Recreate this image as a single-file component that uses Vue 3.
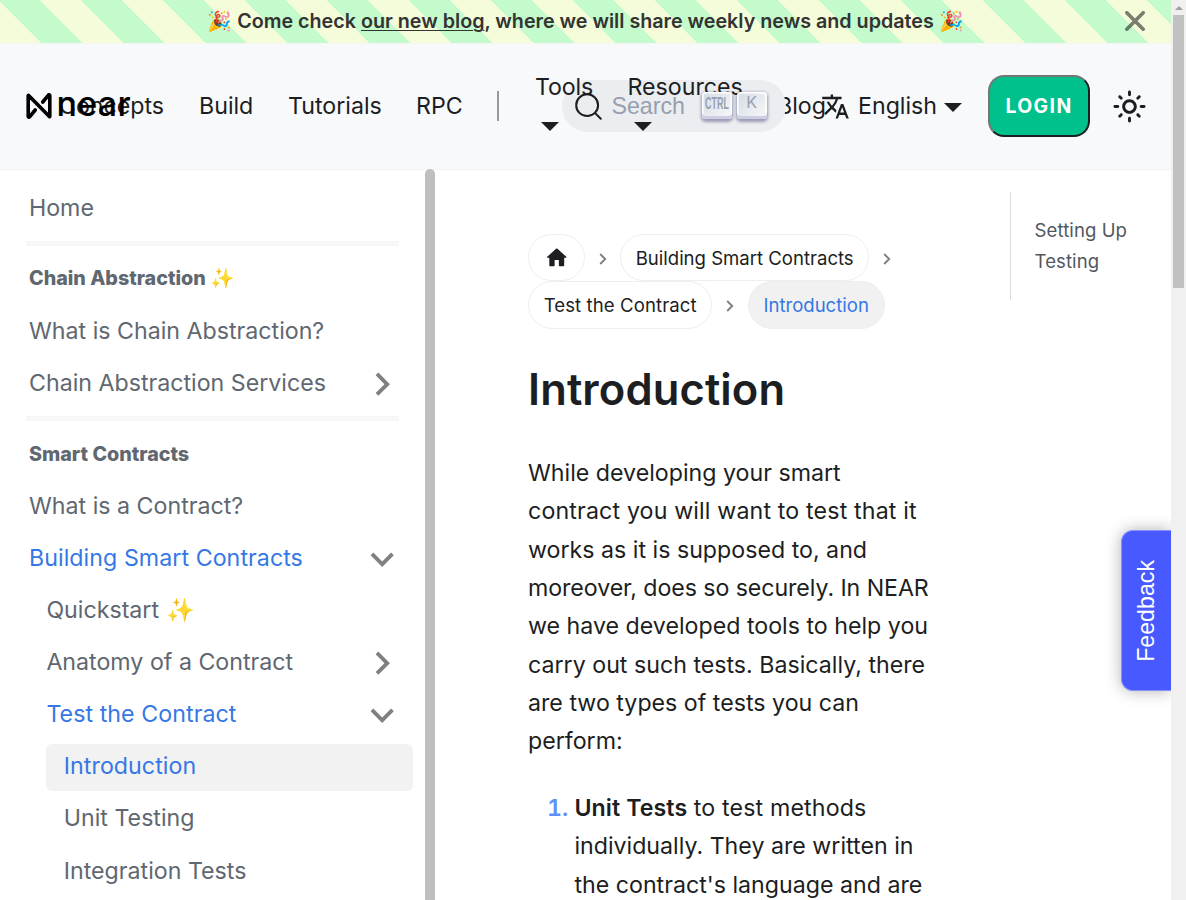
<script setup>
const menu = [
  { text: 'Home', level: 1 },
  { rule: true },
  { text: 'Chain Abstraction ✨', heading: true },
  { text: 'What is Chain Abstraction?', level: 1 },
  { text: 'Chain Abstraction Services', level: 1, caret: 'closed' },
  { rule: true },
  { text: 'Smart Contracts', heading: true },
  { text: 'What is a Contract?', level: 1 },
  { text: 'Building Smart Contracts', level: 1, caret: 'open', active: true },
  { text: 'Quickstart ✨', level: 2 },
  { text: 'Anatomy of a Contract', level: 2, caret: 'closed' },
  { text: 'Test the Contract', level: 2, caret: 'open', active: true },
  { text: 'Introduction', level: 3, active: true, current: true },
  { text: 'Unit Testing', level: 3 },
  { text: 'Integration Tests', level: 3 }
]
const crumbs = [
  { home: true },
  { text: 'Building Smart Contracts' },
  { text: 'Test the Contract' },
  { text: 'Introduction', current: true }
]
</script>

<template>
  <div class="page">
    <div class="view">
      <div class="announce">
        <div class="announce-text">🎉 Come check <a>our new blog</a>, where we will share weekly news and updates 🎉</div>
        <svg class="close" viewBox="0 0 20 20"><path d="M1.8 1.8 18.2 18.2M18.2 1.8 1.8 18.2" fill="none" stroke="#000" stroke-opacity=".5" stroke-width="3.6" stroke-linecap="round" /></svg>
      </div>

      <nav class="navbar">
        <div class="brand">
          <svg class="mark" viewBox="0 0 26 26"><path d="M2.2 2.7v20.6c0 1 1 1.2 1.6.4L9.2 17M23.8 23.3V2.7c0-1-1-1.2-1.6-.4L16.8 9M2.4 2.3 23.6 23.7" fill="none" stroke="#000" stroke-width="3.6" stroke-linecap="round" stroke-linejoin="round" /></svg>
          <span class="wordmark">near</span>
        </div>
        <div class="links">
          <a class="concepts">Concepts</a>
          <a class="build">Build</a>
          <a class="tutorials">Tutorials</a>
          <a class="rpc">RPC</a>
          <span class="divider"></span>
          <a class="drop tools">Tools<i class="tri"></i></a>
          <a class="drop resources">Resources<i class="tri"></i></a>
          <a class="blog">Blog</a>
        </div>
        <div class="nav-end">
          <a class="lang">
            <svg viewBox="0 0 24 24"><path fill="currentColor" d="M12.87 15.07l-2.54-2.51.03-.03c1.74-1.94 2.98-4.17 3.71-6.53H17V4h-7V2H8v2H1v1.99h11.17C11.5 7.92 10.44 9.75 9 11.35 8.07 10.32 7.3 9.19 6.69 8h-2c.73 1.63 1.73 3.17 2.98 4.56l-5.09 5.02L4 19l5-5 3.11 3.11.76-2.04zM18.5 10h-2L12 22h2l1.12-3h4.75L21 22h2l-4.5-12zm-2.62 7l1.62-4.33L19.12 17h-3.24z" /></svg>
            <span>English</span><i class="tri"></i>
          </a>
          <button class="login">LOGIN</button>
          <svg class="sun" viewBox="0 0 24 24"><path fill="currentColor" d="M12,9c1.65,0,3,1.35,3,3s-1.35,3-3,3s-3-1.35-3-3S10.35,9,12,9 M12,7c-2.76,0-5,2.24-5,5s2.24,5,5,5s5-2.24,5-5 S14.76,7,12,7L12,7z M2,13l2,0c0.55,0,1-0.45,1-1s-0.45-1-1-1l-2,0c-0.55,0-1,0.45-1,1S1.45,13,2,13z M20,13l2,0c0.55,0,1-0.45,1-1 s-0.45-1-1-1l-2,0c-0.55,0-1,0.45-1,1S19.45,13,20,13z M11,2v2c0,0.55,0.45,1,1,1s1-0.45,1-1V2c0-0.55-0.45-1-1-1S11,1.45,11,2z M11,20v2c0,0.55,0.45,1,1,1s1-0.45,1-1v-2c0-0.55-0.45-1-1-1C11.45,19,11,19.45,11,20z M5.99,4.58c-0.39-0.39-1.03-0.39-1.41,0 c-0.39,0.39-0.39,1.03,0,1.41l1.06,1.06c0.39,0.39,1.03,0.39,1.41,0s0.39-1.03,0-1.41L5.99,4.58z M18.36,16.95 c-0.39-0.39-1.03-0.39-1.41,0c-0.39,0.39-0.39,1.03,0,1.41l1.06,1.06c0.39,0.39,1.03,0.39,1.41,0c0.39-0.39,0.39-1.03,0-1.41 L18.36,16.95z M19.42,5.99c0.39-0.39,0.39-1.03,0-1.41c-0.39-0.39-1.03-0.39-1.41,0l-1.06,1.06c-0.39,0.39-0.39,1.03,0,1.41 s1.03,0.39,1.41,0L19.42,5.99z M7.05,18.36c0.39-0.39,0.39-1.03,0-1.41c-0.39-0.39-1.03-0.39-1.41,0l-1.06,1.06 c-0.39,0.39-0.39,1.03,0,1.41s1.03,0.39,1.41,0L7.05,18.36z" /></svg>
        </div>
        <div class="search-bg"></div>
        <div class="search">
          <svg viewBox="0 0 20 20"><path d="M14.386 14.386l4.0877 4.0877-4.0877-4.0877c-2.9418 2.9419-7.7115 2.9419-10.6533 0-2.9419-2.9418-2.9419-7.7115 0-10.6533 2.9418-2.9419 7.7115-2.9419 10.6533 0 2.9419 2.9418 2.9419 7.7115 0 10.6533z" fill="none" stroke="#1c1e21" stroke-width="1.4" stroke-linecap="round" stroke-linejoin="round" /></svg>
          <span class="placeholder">Search</span>
          <kbd><span class="ctrl">CTRL</span></kbd>
          <kbd class="k">K</kbd>
        </div>
      </nav>

      <div class="main">
        <aside class="sidebar">
          <div class="menu">
            <template v-for="(m, i) in menu" :key="i">
              <div v-if="m.rule" class="rule"></div>
              <div v-else-if="m.heading" class="item heading level-1">{{ m.text }}</div>
              <div v-else class="item" :class="['level-' + m.level, { active: m.active, current: m.current }]">
                <span>{{ m.text }}</span>
                <svg v-if="m.caret" class="caret" :class="m.caret" viewBox="0 0 24 24"><path fill="#808080" d="M7.41 15.41L12 10.83l4.59 4.58L18 14l-6-6-6 6z" /></svg>
              </div>
            </template>
          </div>
          <div class="side-thumb"></div>
        </aside>

        <article class="doc">
          <ul class="crumbs">
            <li v-for="(c, i) in crumbs" :key="i">
              <span class="pill" :class="{ current: c.current, home: c.home }">
                <svg v-if="c.home" viewBox="0 0 24 24"><path fill="#1c1e21" d="M10 19v-5h4v5c0 .55.45 1 1 1h3c.55 0 1-.45 1-1v-7h1.7c.46 0 .68-.57.33-.87L12.67 3.6c-.38-.34-.96-.34-1.34 0l-8.36 7.53c-.34.3-.13.87.33.87H5v7c0 .55.45 1 1 1h3c.55 0 1-.45 1-1z" /></svg>
                <template v-else>{{ c.text }}</template>
              </span>
              <svg v-if="!c.current" class="sep" viewBox="0 0 8 12"><path d="M1.2 1 6.2 6 1.2 11" fill="none" stroke="#808080" stroke-width="1.9" /></svg>
            </li>
          </ul>
          <h1>Introduction</h1>
          <p>While developing your smart <span class="loose">contract you will want to test that it</span> works as it is supposed to, and <span class="tight">moreover, does so securely. In NEAR</span> we have developed tools to help you carry out such tests. Basically, there are two types of tests you can perform:</p>
          <ol>
            <li><strong>Unit Tests</strong> <span class="loose">to test methods</span> individually. They are written in the contract's language and are</li>
          </ol>
        </article>

        <aside class="toc">
          <div class="toc-list"><a>Setting Up</a><a>Testing</a></div>
        </aside>
      </div>

      <div class="feedback"><span>Feedback</span></div>
    </div>
    <div class="scrollbar"><div class="up"></div><div class="thumb"></div></div>
  </div>
</template>

<style>
body { margin: 0; overflow: hidden; }
</style>

<style scoped>
* { box-sizing: border-box; }
.page { display: flex; width: 1186px; height: 900px; overflow: hidden; background: #fff; font-family: Inter, "Liberation Sans", sans-serif; font-size: 23.2px; color: #1c1e21; }
.view { position: relative; width: 1171px; height: 900px; overflow: hidden; display: flex; flex-direction: column; }

.scrollbar { width: 15px; background: #f0f0f0; display: flex; flex-direction: column; align-items: center; }
.up { width: 0; height: 0; margin-top: 6px; border: 4px solid transparent; border-top: 0; border-bottom: 4px solid #a0a0a0; }
.thumb { width: 11px; height: 273px; margin-top: 5px; background: #c1c1c1; }

.announce { flex: none; display: flex; align-items: center; height: 44px; background: repeating-linear-gradient(45deg, #f4fcd9, #f4fcd9 29px, #c4fbcc 29px, #c4fbcc 58px); border-bottom: 1px solid #f3f5f6; background-clip: padding-box; }
.announce-text { flex: 1; padding-left: 72px; text-align: center; font-size: 19.72px; font-weight: 600; white-space: nowrap; color: #333; margin-top: -1px; }
.announce-text a { text-decoration: underline; text-decoration-thickness: 1px; text-underline-offset: 2px; }
.close { width: 20px; height: 20px; margin: -1px 26px 0; }

.navbar { position: relative; flex: none; display: flex; align-items: center; height: 125.6px; background: #f8f9fb; border-bottom: 1px solid #f0f1f3; line-height: 38.28px; }
.brand { position: relative; z-index: 2; display: flex; align-items: center; flex: none; width: 0; margin-left: 26px; white-space: nowrap; color: #000; }
.mark { flex: none; width: 26px; height: 26px; margin-top: -1px; }
.wordmark { margin-left: 4.5px; margin-top: -4px; font-size: 34px; font-weight: 500; letter-spacing: .3px; }
.links { display: flex; align-items: center; flex: none; width: 800px; white-space: nowrap; margin-top: -1px; }
.links a { flex: none; }
.concepts { width: 140px; margin-left: 33px; }
.build { width: 89px; }
.tutorials { width: 128px; }
.rpc { width: 81px; }
.divider { flex: none; width: 2px; height: 30px; background: #999a9c; margin-right: 36px; }
.drop { position: relative; z-index: 3; display: flex; flex-direction: column; width: 92.5px; }
.tools { letter-spacing: -.15px; }
.tri { display: block; width: 0; height: 0; border: 9px solid transparent; border-top-color: #1c1e21; border-bottom: 0; }
.drop .tri { margin: 16px 0 13px 6px; }
.resources { width: 149.5px; }
.nav-end { position: absolute; right: 0; top: 0; height: 124px; width: 350px; display: flex; align-items: center; }
.lang { display: flex; align-items: center; }
.lang svg { width: 29px; height: 29px; margin-right: 8px; }
.lang .tri { margin: 3px 0 0 7px; }
.login { width: 102px; height: 62px; margin-left: 26px; padding: 0; border: 2px solid; border-color: #767676 #1c1e21 #1c1e21 #767676; border-radius: 16px; background: #00c08b; color: #fff; font: 700 19.4px Inter, sans-serif; letter-spacing: 1.4px; }
.sun { width: 35px; height: 35px; margin: 1px 0 0 22px; }
.search-bg { position: absolute; z-index: 1; left: 562px; top: 36px; width: 224px; height: 52px; border-radius: 26px; background: #ebedf0; }
.search { position: absolute; z-index: 4; left: 574px; top: 36px; height: 52px; display: flex; align-items: center; }
.search svg { width: 29px; height: 29px; }
.placeholder { width: 90px; margin-left: 8.5px; color: #969faf; font-family: "Liberation Sans", sans-serif; }
kbd { display: flex; align-items: center; justify-content: center; width: 30px; height: 27px; margin: -2px 5px 0 0; border-radius: 4px; background: linear-gradient(-225deg, #d5dbe4, #f8f8f8); box-shadow: inset 0 -3px 0 0 #cdcde6, inset 0 0 1px 1.5px #fff, 0 1.5px 3px 1px rgba(30, 35, 90, .4); color: #969faf; font: 16px Inter, sans-serif; padding-bottom: 6px; }
kbd .ctrl { font: 700 16.5px "Liberation Sans", sans-serif; transform: scaleX(.54); margin-top: 2px; }

.main { flex: 1; display: flex; min-height: 0; }
.sidebar { position: relative; flex: none; width: 435px; color: #606770; }
.menu { padding: 15.8px 21.6px 0 11.6px; }
.item { display: flex; align-items: center; height: 46.4px; padding: 0 0 1px 17.4px; margin-bottom: 5.74px; border-radius: 5.8px; line-height: 29px; white-space: nowrap; }
.item.level-2 { margin-left: 17.4px; }
.item.level-3 { margin-left: 34.8px; }
.heading { font-size: 19.72px; font-weight: 800; }
.active { color: #3578e5; letter-spacing: .06px; }
.current { background: #f2f2f2; }
.rule { height: 5px; background: #f7f7f7; margin: 9.2px 14px 10.3px; }
.caret { width: 46.4px; height: 46.4px; margin: 1px 8.5px 0 auto; }
.caret.closed { transform: rotate(90deg); }
.caret.open { transform: rotate(180deg); }
.side-thumb { position: absolute; right: 0; top: -.6px; width: 10px; height: 760px; border-radius: 5px; background: #bfbfbf; }

.doc { flex: none; width: 406px; margin-left: 93px; padding-top: 64.4px; line-height: 38.28px; }
.crumbs { display: flex; flex-wrap: wrap; list-style: none; margin: 0; padding: 0; font-size: 18.56px; width: 420px; }
.crumbs li { display: flex; align-items: center; }
.crumbs li:nth-child(3) { letter-spacing: .1px; }
.pill { display: flex; align-items: center; height: 47.4px; padding: 0 14.7px; border: 1px solid #eee; border-radius: 24px; }
.pill.home { width: 56.5px; }
.pill.current { background: #f1f1f1; color: #3578e5; }
.pill svg { flex: none; width: 25.5px; height: 25.5px; }
.sep { width: 8px; height: 12px; margin: 2px 13.5px 0 14px; }
h1 { margin: 31.4px 0 36px; font-size: 43.5px; line-height: 58px; font-weight: 600; letter-spacing: .12px; }
p { margin: 0 0 28.6px; }
.loose { letter-spacing: .15px; }
.tight { letter-spacing: -.08px; }
ol { margin: 0; padding-left: 46.4px; }
ol li::marker { color: #6090fa; font-weight: 600; }
strong { font-weight: 600; letter-spacing: .08px; }

.toc { margin-left: 76px; padding-top: 22px; }
.toc-list { display: flex; flex-direction: column; height: 108px; padding: 23px 0 0 23.6px; border-left: 1px solid #dadde1; font-size: 18.56px; line-height: 31px; color: #525860; white-space: nowrap; letter-spacing: .08px; }

.feedback { position: absolute; z-index: 9; right: 0; top: 530px; width: 50px; height: 161px; display: flex; align-items: center; justify-content: center; padding-right: 1px; border: 1px solid #8690ff; border-right: 0; border-radius: 12px 0 0 12px; background: #485aff; box-shadow: 0 0 16px rgba(0, 0, 0, .3); color: #fff; font: 23.2px "Liberation Sans", sans-serif; }
.feedback span { writing-mode: vertical-rl; transform: rotate(180deg); }
</style>
